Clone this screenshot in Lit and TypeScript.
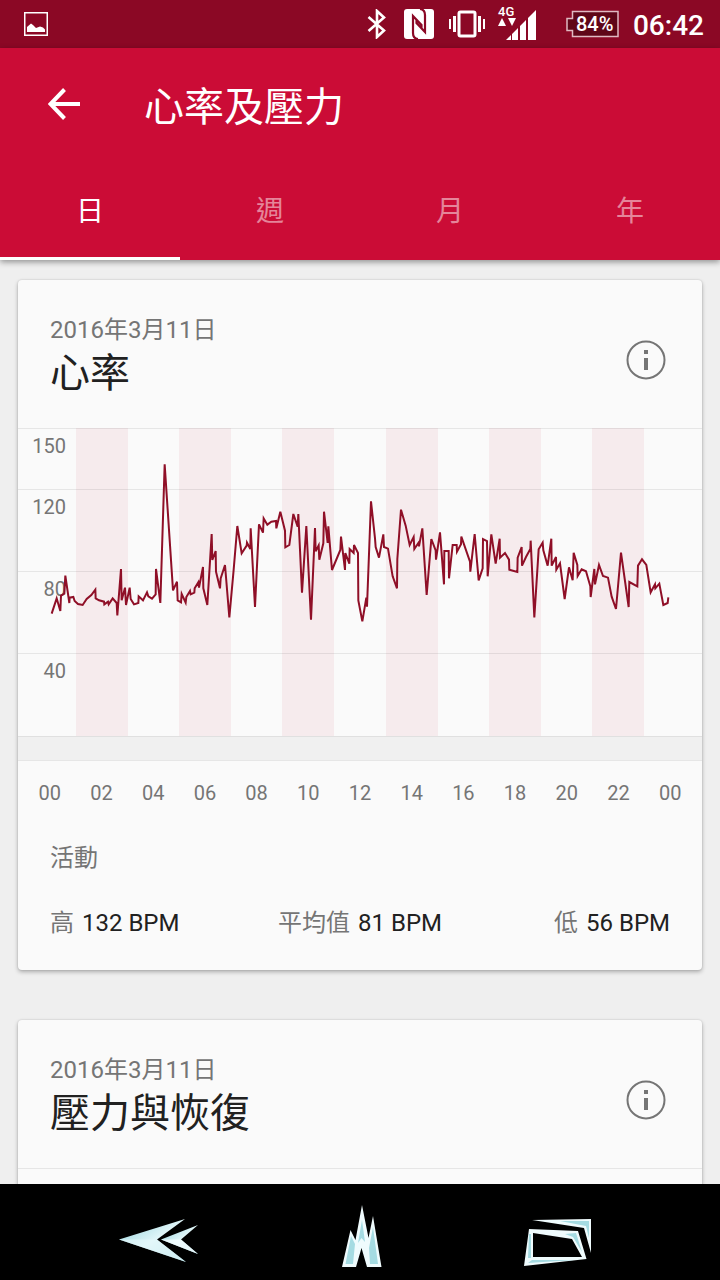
import { LitElement, html, svg, css } from "lit";
import { customElement, property, state } from "lit/decorators.js";

/* Samples of the day's heart rate, three units to one chart pixel. */
const HEART_TRACE = `
101,566 116,520 127,558 129,512 139,506 142,452 154,534 155,518 166,516 170,528 180,537 194,540
206,522 220,510 232,494 233,520 243,526 258,530 259,538 270,530 272,538 284,520 296,534 298,571
309,432 311,526 321,488 324,540 335,488 338,522 348,538 361,534 362,514 375,526 387,502 391,514
402,521 413,508 414,432 427,534 440,118 465,496 477,470 479,526 489,532 491,507 503,533 505,516
516,498 518,508 529,503 530,490 541,472 543,488 555,426 556,490 568,540 581,327 583,405 593,378
594,440 606,490 608,460 621,420 634,577 647,434 658,303 671,385 686,362 687,353 697,372 698,310
711,546 723,298 735,323 737,280 748,299 760,290 774,288 775,310 787,260 801,317 802,367 814,360
826,267 839,305 841,267 852,503 865,303 879,584 891,309 893,379 902,361 904,404 916,355 918,260
929,354 931,304 942,435 967,375 969,335 981,435 982,384 994,416 995,372 1007,384 1008,360
1020,384 1021,526 1033,589 1045,518 1047,545 1059,229 1071,340 1073,366 1083,398 1096,328
1098,366 1110,371 1124,454 1137,490 1138,402 1149,254 1163,302 1175,360 1187,336 1189,372
1201,354 1203,364 1213,310 1226,510 1240,342 1253,376 1254,404 1266,322 1278,478 1279,378
1292,378 1293,460 1304,360 1316,360 1317,380 1329,358 1330,335 1356,410 1357,440 1370,327
1382,466 1394,430 1395,342 1407,348 1409,454 1420,328 1433,416 1445,341 1446,398 1461,384
1473,404 1474,434 1498,441 1499,398 1511,366 1512,422 1524,396 1537,372 1538,347 1549,577
1562,373 1574,353 1576,376 1589,422 1600,341 1601,422 1614,396 1615,434 1626,415 1640,522
1653,427 1664,466 1667,383 1678,420 1679,453 1691,433 1704,439 1717,484 1718,516 1729,432
1731,478 1743,420 1755,453 1770,458 1781,515 1794,552 1809,383 1832,546 1834,471 1858,484
1860,422 1872,403 1885,420 1898,502 1911,478 1912,490 1924,476 1936,540 1949,534 1951,517`;

const HOURS = ["00", "02", "04", "06", "08", "10", "12", "14", "16", "18", "20", "22", "00"];
const BANDS = [58, 161, 264, 368, 471, 574];
const LEVELS = [
  { label: "150", y: 0 },
  { label: "120", y: 61 },
  { label: "80", y: 143 },
  { label: "40", y: 225 },
];

@customElement("heart-chart")
class HeartChart extends LitElement {
  static styles = css`
    :host { display: block; }
    .plot { display: block; width: 100%; height: auto; }
    .band { fill: #f6ebed; }
    .grid { stroke: #000; stroke-opacity: 0.08; }
    .level { font: 20px Roboto, sans-serif; fill: #757575; text-anchor: end; }
    .trace { fill: none; stroke: #8f0f27; stroke-width: 2; vector-effect: non-scaling-stroke; }
    .gutter {
      height: 23px;
      background: #f0f0f0;
      border-top: 1px solid #e0e0e0;
      border-bottom: 1px solid #e6e6e6;
    }
    .hours {
      display: grid;
      grid-template-columns: repeat(13, 1fr);
      margin: 0;
      padding: 20px 6px 0;
      list-style: none;
      font-size: 20px;
      line-height: 24px;
      text-align: center;
      color: #757575;
    }
  `;

  render() {
    return html`
      <svg class="plot" viewBox="0 0 684 308" role="img" aria-label="心率">
        ${BANDS.map((x) => svg`<rect class="band" x=${x} y="0" width="52" height="308" />`)}
        ${LEVELS.map(
          (l) => svg`
            <line class="grid" x1="0" x2="684" y1=${l.y + 0.5} y2=${l.y + 0.5} />
            <text class="level" x="48" y=${l.y + 25}>${l.label}</text>`
        )}
        <g transform="translate(0 -3) scale(0.33333)">
          <polyline class="trace" points=${HEART_TRACE} />
        </g>
      </svg>
      <div class="gutter"></div>
      <ol class="hours">${HOURS.map((h) => html`<li>${h}</li>`)}</ol>
    `;
  }
}

@customElement("metric-card")
class MetricCard extends LitElement {
  @property() date = "";
  @property() heading = "";

  static styles = css`
    :host {
      display: block;
      background: #fafafa;
      border-radius: 4px;
      box-shadow: 0 2px 4px rgba(0, 0, 0, 0.28), 0 0 2px rgba(0, 0, 0, 0.14);
    }
    .head {
      display: flex;
      justify-content: space-between;
      align-items: center;
      height: 148px;
      padding: 0 32px;
    }
    .date { margin: 0; padding-top: 12px; font-size: 24px; line-height: 28px; color: #757575; }
    .heading { margin: 0; font-size: 40px; line-height: 60px; font-weight: 400; color: #212121; }
    .info { display: block; padding: 0; border: 0; background: none; color: #757575; margin-top: 12px; }
    .glyph { display: block; width: 48px; height: 48px; }
    .divider { height: 1px; background: #e6e6e6; }
  `;

  render() {
    return html`
      <header class="head">
        <div>
          <p class="date">${this.date}</p>
          <h2 class="heading">${this.heading}</h2>
        </div>
        <button class="info" type="button" aria-label="資訊">
          <svg class="glyph" viewBox="0 0 48 48">
            <circle cx="24" cy="24" r="18.5" fill="none" stroke="currentColor" stroke-width="2" />
            <path d="M22 14h4v4h-4zM22 22h4v12h-4z" fill="currentColor" />
          </svg>
        </button>
      </header>
      <slot><div class="divider"></div></slot>
    `;
  }
}

@customElement("status-bar")
class StatusBar extends LitElement {
  static styles = css`
    :host {
      display: flex;
      align-items: center;
      height: 48px;
      padding: 0 16px 0 24px;
      background: #8b0825;
      color: #fff;
    }
    .icon { display: block; fill: currentColor; flex: none; }
    .picture { margin-right: auto; }
    .bluetooth { margin-right: 16px; }
    .nfc { margin-right: 14px; }
    .vibrate { margin-right: 12px; }
    .signal { margin-right: 29px; }
    .network { font: 500 13px Roboto, sans-serif; }
    .percent { font: 500 20px Roboto, sans-serif; }
    .battery { margin-right: 14px; }
    .clock { font-size: 28px; line-height: 46px; font-weight: 500; padding-top: 4px; }
  `;

  render() {
    return html`
      <svg class="icon picture" width="24" height="24" viewBox="0 0 24 24">
        <rect x=".75" y=".75" width="22.5" height="22.5" fill="none" stroke="currentColor" stroke-width="1.5" />
        <path d="M3 20v-5l4-3.500 2 1.500 3 3 4-1.500 3 1 2 2v2.500z" />
      </svg>
      <svg class="icon bluetooth" width="20" height="30" viewBox="0 0 20 30">
        <path d="M1.500 8L17 21.500 10 28V2l7 6.500L1.500 22" fill="none" stroke="currentColor" stroke-width="2.600" />
      </svg>
      <svg class="icon nfc" width="32" height="32" viewBox="0 0 32 32">
        <rect x="1" y="1" width="30" height="30" rx="3" />
        <path d="M15 31Q10 30.500 10 25V8L18.500 17V21M17 1Q22 1.500 22 7V24L13.500 15V11" fill="none" stroke="#8b0825" stroke-width="2.200" />
      </svg>
      <svg class="icon vibrate" width="36" height="28" viewBox="0 0 36 28">
        <rect x="10" y="2" width="16" height="24" rx="1.500" fill="none" stroke="currentColor" stroke-width="3" />
        <path d="M4 6h3v16H4zM0 9h2v10H0zM29 6h3v16h-3zM34 9h2v10h-2z" />
      </svg>
      <svg class="icon signal" width="40" height="44" viewBox="0 -4 40 44">
        <text class="network" x="1" y="10">4G</text>
        <path d="M1 20l4-8 4 8zM11 12h8l-4 8z" />
        <path d="M9 34l5-5v5zM15 28l6-6v12h-6zM23 20l6-6v20h-6zM31 12l8-8v30h-8z" />
      </svg>
      <svg class="icon battery" width="53" height="28" viewBox="0 0 53 28">
        <path d="M6.500 1.500H52v25H6.500v-6H1v-12h5.500z" fill="#5f0618" stroke="#e0b9c1" stroke-width="1.500" />
        <text class="percent" x="10" y="21">84%</text>
      </svg>
      <time class="clock">06:42</time>
    `;
  }
}

@customElement("nav-bar")
class NavBar extends LitElement {
  static styles = css`
    :host {
      display: grid;
      grid-template-columns: repeat(3, 28%);
      justify-content: center;
      height: 96px;
      background: #000;
    }
    .key { display: grid; place-items: center; padding: 6px 0 0; border: 0; background: none; }
    .glyph { display: block; width: 84px; height: 68px; stroke-linejoin: miter; }
  `;

  render() {
    return html`
      <button class="key" type="button" aria-label="返回">
        <svg class="glyph" viewBox="116 1201 84 68">
          <defs>
            <linearGradient id="ice" x1="0" y1="0" x2="1" y2="1">
              <stop offset="0" stop-color="#8fd0da" />
              <stop offset="0.500" stop-color="#dff5f8" />
              <stop offset="1" stop-color="#a6dbe3" />
            </linearGradient>
          </defs>
          <path d="M119 1239.500L185 1219 157 1239.500 186 1262z" fill="url(#ice)" />
          <path d="M119 1239.500L157 1239.500 186 1262z" fill="#e6f9fc" opacity=".6" />
          <path d="M161 1239.500L198 1225 181 1239.500 198 1254z" fill="url(#ice)" />
          <path d="M161 1239.500L181 1239.500 198 1254z" fill="#f2fdff" opacity=".8" />
        </svg>
      </button>
      <button class="key" type="button" aria-label="主畫面">
        <svg class="glyph" viewBox="318 1201 84 68">
          <path d="M342 1267L350.500 1230 355.500 1240 362 1205 368.500 1238 373 1216 381.500 1267H367L361.500 1248 356 1267z" fill="#effbfd" />
          <path d="M345.500 1264L351 1236 355 1244 353 1264zM358 1243L362 1220 365 1242 361.500 1238zM369 1248L373 1227 378 1264H370z" fill="#a5dbe2" />
        </svg>
      </button>
      <button class="key" type="button" aria-label="最近使用">
        <svg class="glyph" viewBox="520 1201 84 68">
          <path d="M532 1220L591 1219V1253L584 1228z" fill="#effbfd" />
          <path d="M560 1221L589 1221V1238L586 1226z" fill="#a5dbe2" />
          <path fill-rule="evenodd" d="M529 1229L578 1231 586.500 1259 524 1266zM533 1233V1257H582L572 1239z" fill="#effbfd" />
          <path d="M529 1234h2v24h-3zM565 1234l11-1 6 19-9-15zM528 1263l4-3h42z" fill="#a5dbe2" />
        </svg>
      </button>
    `;
  }
}

@customElement("app-root")
class AppRoot extends LitElement {
  @state() private range = "日";

  static styles = css`
    :host {
      display: flex;
      flex-direction: column;
      height: 100vh;
      overflow: hidden;
      background: #efefef;
      font-family: Roboto, "Noto Sans CJK TC", sans-serif;
    }
    status-bar, nav-bar { flex: none; }
    .appbar {
      position: relative;
      flex: none;
      background: #cb0c36;
      color: #fff;
      box-shadow: 0 2px 6px rgba(0, 0, 0, 0.4);
    }
    .toolbar { display: flex; align-items: center; gap: 64px; height: 112px; padding: 0 48px; }
    .back { padding: 0; border: 0; background: none; color: inherit; }
    .arrow { display: block; width: 32px; height: 32px; }
    .title { margin: 0; padding-top: 8px; font-size: 40px; line-height: 56px; font-weight: 400; }
    .tabs { display: grid; grid-template-columns: repeat(4, 1fr); height: 100px; }
    .tab {
      padding: 0;
      border: 0;
      border-bottom: 3px solid transparent;
      background: none;
      font: 28px Roboto, "Noto Sans CJK TC", sans-serif;
      color: rgba(255, 255, 255, 0.5);
    }
    .tab[aria-selected="true"] { color: #fff; border-bottom-color: #fff; }
    .content {
      flex: 1;
      min-height: 0;
      overflow: hidden;
      display: flex;
      flex-direction: column;
      gap: 50px;
      padding: 20px 18px 0;
    }
    metric-card { flex: none; }
    .next { min-height: 300px; }
    .section { margin: 0; padding: 35px 32px 0; font-size: 24px; line-height: 36px; font-weight: 400; color: #757575; }
    .stats {
      display: grid;
      grid-template-columns: 1fr auto 1fr;
      margin: 0;
      padding: 29px 32px 29px;
      font-size: 24px;
      line-height: 36px;
    }
    .stat { display: flex; gap: 8px; }
    .stat:last-child { justify-content: flex-end; }
    .name { color: #757575; }
    .value { margin: 0; color: #212121; }
  `;

  render() {
    return html`
      <status-bar></status-bar>
      <header class="appbar">
        <div class="toolbar">
          <button class="back" type="button" aria-label="返回">
            <svg class="arrow" viewBox="0 0 32 32">
              <path d="M32 16H3M16.500 1.500L2.500 16l14 14.500" fill="none" stroke="currentColor" stroke-width="4" />
            </svg>
          </button>
          <h1 class="title">心率及壓力</h1>
        </div>
        <div class="tabs" role="tablist">
          ${["日", "週", "月", "年"].map(
            (name) => html`<button
              class="tab"
              type="button"
              role="tab"
              aria-selected=${name === this.range ? "true" : "false"}
              @click=${() => (this.range = name)}
            >${name}</button>`
          )}
        </div>
      </header>
      <main class="content">
        <metric-card date="2016年3月11日" heading="心率">
          <heart-chart></heart-chart>
          <h3 class="section">活動</h3>
          <dl class="stats">
            ${[["高", "132 BPM"], ["平均值", "81 BPM"], ["低", "56 BPM"]].map(
              ([name, value]) => html`<div class="stat"><dt class="name">${name}</dt><dd class="value">${value}</dd></div>`
            )}
          </dl>
        </metric-card>
        <metric-card class="next" date="2016年3月11日" heading="壓力與恢復"></metric-card>
      </main>
      <nav-bar></nav-bar>
    `;
  }
}
